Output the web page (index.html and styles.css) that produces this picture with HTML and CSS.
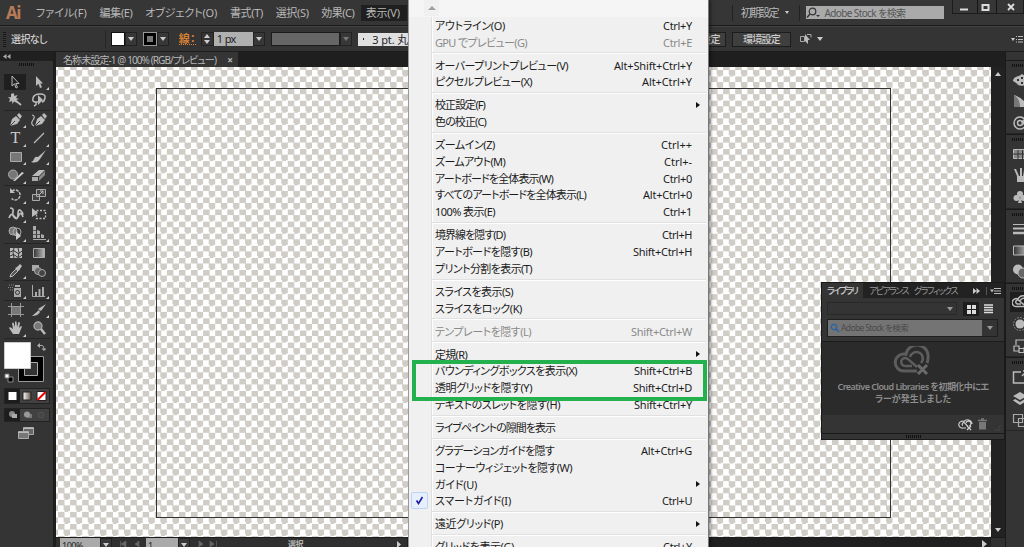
FILE: index.html
```
<!DOCTYPE html>
<html lang="ja">
<head>
    <meta charset="UTF-8">
    <meta name="viewport" content="width=device-width, initial-scale=1.0">
    <title>名称未設定-1</title>
    <link rel="stylesheet" href="styles.css">
</head>
<body>
<div class="app">
    <header class="menubar">
        <div class="logo"><span data-w="14">Ai</span></div>
        <nav class="menus">
            <span data-w="51">ファイル(F)</span>
            <span data-w="33">編集(E)</span>
            <span data-w="72">オブジェクト(O)</span>
            <span data-w="33">書式(T)</span>
            <span data-w="33">選択(S)</span>
            <span data-w="33">効果(C)</span>
        </nav>
        <div class="menu-open"><span data-w="34">表示(V)</span></div>
        <div class="workspace"><span data-w="37">初期設定</span><i class="caret small"></i></div>
        <div class="stock">
            <svg width="15" height="12" viewBox="0 0 15 12"><circle cx="6.5" cy="4.5" r="3.3" fill="none" stroke="#333" stroke-width="1.2"/><path d="M4 7L1 10.500" stroke="#333" stroke-width="1.5"/><path d="M10 8h4l-2 2z" fill="#333"/></svg>
            <span data-w="81">Adobe Stock を検索</span>
        </div>
        <div class="window-buttons">
            <svg width="70" height="14" viewBox="0 0 70 14"><path d="M24.500 0v13M43.500 0v13" stroke="#151515"/><path d="M7 9.500h8" stroke="#ddd" stroke-width="2"/><path d="M29.500 5h6v5h-6z" fill="none" stroke="#ddd" stroke-width="2"/><path d="M55 4l6 6M61 4l-6 6" stroke="#ddd" stroke-width="1.800"/></svg>
        </div>
    </header>

    <div class="control">
        <i class="grip-v"></i>
        <b class="selection" data-w="36">選択なし</b>
        <i class="divider"></i>
        <i class="swatch"></i><span class="drop"><i class="caret"></i></span>
        <i class="swatch stroke"></i><span class="drop"><i class="caret"></i></span>
        <b class="stroke-label" data-w="17">線：</b>
        <span class="stepper"><i class="up"></i><i class="caret"></i></span>
        <span class="weight"><span data-w="19">1 px</span></span><span class="drop"><i class="caret"></i></span>
        <span class="profile"></span><span class="drop off"><i class="caret"></i></span>
        <span class="brush"><i class="dot"></i><span data-w="36">3 pt. 丸</span></span>
        <span class="btn doc"><b data-w="19">設定</b></span>
        <span class="btn"><b data-w="37">環境設定</b></span>
        <svg class="align" width="24" height="12" viewBox="0 0 24 12"><path d="M.5 3.500h4v5h-4zM7 1.500h4v3" fill="none" stroke="#aaa"/><path d="M5 1l5 6H8v4L5 8z" fill="#bbb"/><path d="M17 4h6l-3 4z" fill="#ccc"/></svg>
        <svg class="bar-menu" width="13" height="8" viewBox="0 0 13 8"><path d="M0 3h4l-2 3z" fill="#ccc"/><path d="M5 1.500h1M5 4.500h1M5 7h1M7 1.500h5M7 4.500h5M7 7h5" stroke="#bbb"/></svg>
    </div>

    <div class="main">
        <aside class="tools">
            <div class="tools-head"><svg width="8" height="5" viewBox="0 0 8 5"><path d="M3.500 0v5L0 2.500zM7.500 0v5L4 2.500z" fill="#aaa"/></svg></div>
            <div class="tools-grip"><i class="grip-h"></i></div>
            <div class="group two">
                <span class="tool active"><svg viewBox="0 0 18 16"><path d="M6 2v10l2.500-2.200L10 14l1.500-.7L9.800 9.500H13z" fill="#222" stroke="#bbb"/></svg></span>
                <span class="tool more"><svg viewBox="0 0 18 16"><path d="M6 2v10l2.500-2.200L10 14l2-.7-1.700-3.800H13z" fill="#bbb"/></svg></span>
                <span class="tool"><svg viewBox="0 0 18 16"><path d="M6.500 1l1 3 3-1-1.500 3 3 1-3 1 1 3-3-1.500L5.500 12l-.5-3-3 1 1-3-2-2 3 .2L4 2z" fill="#bbb"/><path d="M8 8l6 5" stroke="#bbb" stroke-width="1.700"/></svg></span>
                <span class="tool"><svg viewBox="0 0 18 16"><path d="M9 10H5.500Q2 10 3 6t7-4 5 4-3 4M5 10q3 2-1 4" fill="none" stroke="#bbb" stroke-width="1.500"/><path d="M8 3v10l5-5z" fill="#bbb"/></svg></span>
            </div>
            <div class="group four">
                <span class="tool more"><svg viewBox="0 0 18 16"><path d="M3 14l2-7 4-3 4 4-3 4zM10 3l2-2 3 3-2 3z" fill="#bbb"/><path d="M3 14l5-5" stroke="#444"/></svg></span>
                <span class="tool"><svg viewBox="0 0 18 16"><path d="M5 14l2-7 4-3 4 4-3 4zM12 3l2-2 3 3-2 3z" fill="#bbb"/><path d="M5 14l5-5" stroke="#444"/><path d="M4 14Q0 12 3 8T2 3" fill="none" stroke="#bbb" stroke-width="1.200"/></svg></span>
                <span class="tool more"><b class="type">T</b></span>
                <span class="tool more"><svg viewBox="0 0 18 16"><path d="M4 13L14 3" stroke="#bbb" stroke-width="1.200"/></svg></span>
                <span class="tool more"><svg viewBox="0 0 18 16"><path d="M3.500 3.500h11v9h-11z" fill="#777" stroke="#aaa"/></svg></span>
                <span class="tool more"><svg viewBox="0 0 18 16"><path d="M16 1L8 8l2 2zM8 8q-3-1-4 2t-3 3q6 2 9-3z" fill="#bbb"/></svg></span>
                <span class="tool more"><svg viewBox="0 0 18 16"><circle cx="6" cy="7.500" r="4.500" fill="#777" stroke="#aaa"/><path d="M6 14l9-9 2 1-9 8z" fill="#ccc"/></svg></span>
                <span class="tool more"><svg viewBox="0 0 18 16"><path d="M2 9l7-6h6l-6 6z" fill="#bbb"/><path d="M2 10h6v4H2z" fill="#aaa"/><path d="M9 10l6-6v4l-6 6z" fill="#888"/></svg></span>
            </div>
            <div class="group three">
                <span class="tool more"><svg viewBox="0 0 18 16"><path d="M5 4a5 5 0 1 1-.5 7.500" fill="none" stroke="#bbb" stroke-width="1.500" stroke-dasharray="3 1"/><path d="M3 1v5h5z" fill="#bbb"/></svg></span>
                <span class="tool more"><svg viewBox="0 0 18 16"><path d="M6.500 2.500h9v7h-9zM2.500 7.500h7v6h-7z" fill="#444" stroke="#aaa"/><path d="M9 8l4-4M10 4h3v3" fill="none" stroke="#bbb"/></svg></span>
                <span class="tool more"><svg viewBox="0 0 18 16"><path d="M3 2q4 0 3 4t2 6 3-4 3-3 1 4M2 12q2-5 4-3t3 3 3-3 4 2" fill="none" stroke="#bbb" stroke-width="1.700"/></svg></span>
                <span class="tool"><svg viewBox="0 0 18 16"><path d="M2 2v9l6-4z" fill="#bbb"/><path d="M6.500 4.500h9v8h-9z" fill="none" stroke="#bbb" stroke-width="1.300" stroke-dasharray="2 1.500"/></svg></span>
                <span class="tool more"><svg viewBox="0 0 18 16"><circle cx="6" cy="6" r="4" fill="#777" stroke="#aaa"/><circle cx="10" cy="7" r="4" fill="none" stroke="#aaa"/><path d="M9 6v9l5-4z" fill="#ccc"/></svg></span>
                <span class="tool more"><svg viewBox="0 0 18 16"><path d="M3 1h3v12H3zM7 5l3 1v7H7zM11 9l3 1v3h-3zM3 14h13v1H3z" fill="#aaa"/><path d="M3 5.500h3M3 9.500h7" stroke="#555"/></svg></span>
            </div>
            <div class="group mesh">
                <span class="tool"><svg viewBox="0 0 18 16"><path d="M3 3h12v10H3z" fill="#bbb"/><path d="M3 7q4-3 6 0t6-1M3 11q4-3 6 0t6-1M7 3q-2 4 0 10M11 3q2 4 0 10" fill="none" stroke="#333"/></svg></span>
                <span class="tool"><svg viewBox="0 0 18 16"><defs><linearGradient id="g"><stop stop-color="#333"/><stop offset="1" stop-color="#bbb"/></linearGradient></defs><path d="M3.500 3.500h11v9h-11z" fill="url(#g)" stroke="#aaa"/></svg></span>
                <span class="tool more"><svg viewBox="0 0 18 16"><path d="M3 14l1-3 5-5 2 2-5 5z" fill="#555" stroke="#bbb"/><path d="M8 5l2-1 3-3 2 2-2 3-1 2z" fill="#bbb"/></svg></span>
                <span class="tool"><svg viewBox="0 0 18 16"><path d="M2 2h7v6H2z" fill="#aaa"/><circle cx="8" cy="8" r="3.500" fill="#666" stroke="#aaa"/><circle cx="12" cy="10" r="3.500" fill="#444" stroke="#aaa"/></svg></span>
            </div>
            <div class="group one">
                <span class="tool more"><svg viewBox="0 0 18 16"><path d="M8 2h5v2H8zM7 5h7v9H7z" fill="#aaa"/><path d="M2 2h5M1 4.500h6M3 7h3" stroke="#888" stroke-dasharray="1 1"/><circle cx="10.500" cy="9.500" r="2" fill="none" stroke="#333"/></svg></span>
                <span class="tool more"><svg viewBox="0 0 18 16"><path d="M2.500 2v11.500H15" fill="none" stroke="#aaa"/><path d="M5 9h2v5H5zM8.500 6h2v8h-2zM12 4h2v10h-2z" fill="#aaa"/></svg></span>
            </div>
            <div class="group two">
                <span class="tool"><svg viewBox="0 0 18 16"><path d="M4.500 1v14M13.500 1v14M1 4.500h16M1 12.500h16" stroke="#999"/><path d="M5 5h8v7H5z" fill="#777"/></svg></span>
                <span class="tool more"><svg viewBox="0 0 18 16"><path d="M16 2L8 7l3 2zM9 8L2 14q6 0 8-4z" fill="#bbb"/></svg></span>
                <span class="tool more"><svg viewBox="0 0 18 16"><path d="M6 14L2 8l1-1 3 2-1-6 1.500-.5L8 7V1.500h1.500L10 7l1.500-5 1.500.5L12 8l2-2 1 .5-3 7.500z" fill="#bbb"/></svg></span>
                <span class="tool"><svg viewBox="0 0 18 16"><circle cx="8" cy="6" r="4" fill="#777" stroke="#aaa" stroke-width="1.300"/><path d="M11 9l4 5" stroke="#bbb" stroke-width="2.400"/></svg></span>
            </div>
            <div class="colors">
                <svg width="46" height="48" viewBox="0 0 46 48"><path d="M14.500 17.500h25v25h-25z" fill="#000" stroke="#999"/><path d="M20.500 23.500h13v13h-13z" fill="#333" stroke="#aaa"/><path d="M.5 3.500h26v26H.5z" fill="#fff" stroke="#ccc"/><path d="M34.500 6.500h3.500q2 0 2 4" fill="none" stroke="#aaa"/><path d="M36 4v5l-3-2.500zM37.500 9.500h5L40 12z" fill="#aaa"/><path d="M4 38h5v5H4z" fill="#000" stroke="#888"/><path d="M1 35h4v4H1z" fill="#fff" stroke="#777"/></svg>
            </div>
            <div class="modes">
                <svg width="44" height="14" viewBox="0 0 44 14"><defs><linearGradient id="h"><stop stop-color="#fff"/><stop offset="1" stop-color="#654"/></linearGradient></defs><path d="M0 0h15v14H0z" fill="#1d1d1d"/><path d="M3.500 3h8v8h-8z" fill="#fff"/><path d="M18 3h8v8h-8z" fill="url(#h)" stroke="#222"/><path d="M32 2.500h9v9h-9z" fill="#fff" stroke="#222"/><path d="M32.500 11l8-8" stroke="#e00" stroke-width="2"/></svg>
            </div>
            <div class="modes draw">
                <svg width="44" height="12" viewBox="0 0 44 12"><path d="M0 0h15v12H0z" fill="#1d1d1d"/><circle cx="7" cy="5" r="3" fill="#888"/><path d="M7 5h5v4H7z" fill="#aaa"/><path d="M22 5h5v4h-5z" fill="#777"/><circle cx="22" cy="5.500" r="3" fill="#999"/><circle cx="36" cy="6" r="2.800" fill="#444" stroke="#555"/></svg>
            </div>
            <div class="screen"><svg width="18" height="14" viewBox="0 0 18 14"><path d="M6.500 1.500h10v7h-10z" fill="#666" stroke="#aaa"/><path d="M1.500 5.500h10v7h-10z" fill="#777" stroke="#aaa"/><path d="M6 2.500h11M1 6.500h11" stroke="#bbb"/></svg></div>
        </aside>

        <section class="document">
            <div class="tabs"><div class="tab"><span data-w="153">名称未設定-1 @ 100% (RGB/プレビュー)</span><b>×</b></div></div>
            <div class="view">
                <div class="canvas"><div class="artboard"></div></div>
                <div class="scroll-v"><i class="up"></i><i class="caret"></i></div>
            </div>
            <footer class="status">
                <span class="zoom"><span data-w="21">100%</span></span><span class="drop"><i class="caret"></i></span>
                <svg width="34" height="10" viewBox="0 0 34 10"><path d="M8.500 3v6M14 3v6L9 6zM27 3v6l-4-3z" fill="#666" stroke="#666" stroke-width=".7"/></svg>
                <span class="page">1</span><span class="drop"><i class="caret"></i></span>
                <svg width="30" height="10" viewBox="0 0 30 10"><path d="M9 3v6l4-3zM20 3v6l4-3zM26.500 3v6" fill="#666" stroke="#666" stroke-width=".7"/></svg>
                <b class="status-text"><span data-w="15">選択</span></b>
                <svg class="status-arrow" width="30" height="10" viewBox="0 0 30 10"><path d="M13 0h17v10H13z" fill="#202020"/><path d="M3 3v7l4-3.500zM20 3v7l-4-3.500z" fill="#ccc"/></svg>
                <div class="scroll-h"><svg width="6" height="8" viewBox="0 0 6 8"><path d="M0 0v8l5-4z" fill="#ccc"/></svg></div>
                <i class="corner"></i>
            </footer>
        </section>

        <aside class="dock">
            <div class="dock-group">
                <svg viewBox="0 0 16 16"><path d="M1 9Q1 5 7 4l3-2 5 3v7q-4 3-9 1-1-2-5-4z" fill="#bbb"/><path d="M5 7h2v2H5zM9 5h2v2H9zM9 10h2v2H9z" fill="#333"/></svg>
                <svg viewBox="0 0 16 16"><path d="M2 2v12h14Q12 5 2 2z" fill="#bbb"/><path d="M2 2v12h6Q8 6 2 2z" fill="#777"/></svg>
                <svg viewBox="0 0 16 16"><circle cx="8" cy="8" r="6" fill="none" stroke="#bbb" stroke-width="1.500"/><circle cx="8" cy="8" r="2.500" fill="none" stroke="#bbb" stroke-width="1.500"/><path d="M9 7l4-4 3 3-4 4z" fill="#bbb"/></svg>
            </div>
            <div class="dock-group">
                <svg viewBox="0 0 16 16"><path d="M1.500 3.500h14v9h-14z" fill="#888" stroke="#bbb"/><path d="M1 8h15M6 4v9M10.500 4v9" stroke="#333"/></svg>
                <svg viewBox="0 0 16 16"><path d="M5 9h9v6H5zM2 2l2 0 3 7H5zM8 1h2v8H8zM12 3h2l-1 6h-2z" fill="#bbb"/></svg>
                <svg viewBox="0 0 16 16"><circle cx="8" cy="5" r="3" fill="#bbb"/><circle cx="4.500" cy="9" r="3" fill="#bbb"/><circle cx="11.500" cy="9" r="3" fill="#bbb"/><path d="M8 7l2 7H6z" fill="#bbb"/></svg>
            </div>
            <div class="dock-group">
                <svg viewBox="0 0 16 16"><path d="M1 4.500h15" stroke="#bbb"/><path d="M1 8.500h15" stroke="#bbb" stroke-width="2"/><path d="M1 13h15" stroke="#bbb" stroke-width="2.500"/></svg>
                <svg viewBox="0 0 16 16"><path d="M1.500 4h14v9h-14z" fill="url(#g)" stroke="#bbb"/></svg>
                <svg viewBox="0 0 16 16"><circle cx="6" cy="6.500" r="5" fill="#bbb"/><circle cx="11" cy="10" r="5" fill="#666" stroke="#bbb"/></svg>
            </div>
            <div class="dock-group open">
                <svg viewBox="0 0 16 16"><path d="M15 12.500H5a4 4 0 1 1 1-7.500 6 6 0 0 1 10-1M9 10H6a2 2 0 1 1 1.500-3l6 5M8 7q2-4 6-2" fill="none" stroke="#bbb" stroke-width="1.500"/></svg>
                <svg viewBox="0 0 16 16"><circle cx="8" cy="8" r="4.500" fill="#bbb"/><circle cx="8" cy="8" r="6.500" fill="none" stroke="#999" stroke-dasharray="1.500 1.500"/></svg>
                <svg viewBox="0 0 16 16"><path d="M4 7V2h12v8h-5M2 8h5v5H2zM7 10.500h5v4H7z" fill="none" stroke="#bbb" stroke-width="1.200"/></svg>
            </div>
            <div class="dock-group">
                <svg viewBox="0 0 16 16"><path d="M9 3H1.500v11H14V9M10 7l5-5M11 2h4v4" fill="none" stroke="#bbb" stroke-width="1.500"/></svg>
                <svg viewBox="0 0 16 16"><path d="M8 2l7 4-7 4-7-4zM3 9l5 3 5-3 2 1.500L8 15l-7-4.500z" fill="#bbb"/></svg>
                <svg viewBox="0 0 16 16"><path d="M1.500 2.500h9v8h-9zM6.500 6.500h9v8h-9z" fill="none" stroke="#aaa" stroke-width="1.200"/></svg>
            </div>
        </aside>
    </div>

    <div class="library">
        <div class="lib-tabs">
            <div class="lib-tab"><span data-w="30">ライブラリ</span></div>
            <span data-w="39">アピアランス</span>
            <span data-w="43">グラフィックス</span>
            <svg width="30" height="8" viewBox="0 0 30 8"><path d="M1 1v6l3.500-3zM4.500 1v6L8 4z" fill="#ccc"/><path d="M14.500 0v8" stroke="#555"/><path d="M18 2.500h4l-2 3z" fill="#bbb"/><path d="M22 1.500h7M22 4h7M22 6.500h7" stroke="#bbb"/></svg>
        </div>
        <div class="lib-bar">
            <span class="lib-select"><i class="caret"></i></span>
            <svg width="34" height="14" viewBox="0 0 34 14"><path d="M0 0h16v14H0z" fill="#1d1d1d"/><path d="M4 3h4v4H4zM9 3h4v4H9zM4 8h4v4H4zM9 8h4v4H9z" fill="#ddd"/><path d="M21 3h9M21 5.500h9M21 8h9M21 10.500h9" stroke="#ddd" stroke-width="1.500"/></svg>
        </div>
        <div class="lib-search">
            <span class="lib-input">
                <svg width="10" height="10" viewBox="0 0 10 10"><circle cx="4" cy="4" r="2.700" fill="none" stroke="#2864a8" stroke-width="1.300"/><path d="M6 6l3 3" stroke="#2864a8" stroke-width="1.700"/></svg>
                <span data-w="67">Adobe Stock を検索</span>
            </span>
            <i class="caret"></i>
        </div>
        <div class="lib-body">
            <svg width="40" height="31" viewBox="0 0 40 31"><path d="M24 25H11a8.500 8.500 0 1 1 2-16.700A11 11 0 0 1 35 12q0 3-1 5" fill="none" stroke="#5d5d5d" stroke-width="3"/><path d="M19 20h-7a4 4 0 1 1 3-6.800l9 7.800M17 11a6.500 6.500 0 1 1 11 6" fill="none" stroke="#5d5d5d" stroke-width="2.500"/><path d="M25 19l9 9M34 19l-9 9" stroke="#6a6a6a" stroke-width="3"/></svg>
            <b data-w="151">Creative Cloud Libraries を初期化中にエ</b>
            <b data-w="76">ラーが発生しました</b>
        </div>
        <div class="lib-foot">
            <svg width="46" height="16" viewBox="0 0 46 16"><path d="M8 12H5a3.500 3.500 0 1 1 1-6.500A4.500 4.500 0 0 1 14 8M5 9.500a1.500 1.500 0 1 1 2-2l3 3M8 7a2.500 2.500 0 1 1 3 3" fill="none" stroke="#ccc" stroke-width="1.200"/><path d="M9 10l4 4M13 10l-4 4" stroke="#ccc" stroke-width="1.300"/><path d="M20 4.500h9M23 3h3" stroke="#777" stroke-width="1.300"/><path d="M21 6h7v7.500h-7z" fill="#777"/><path d="M37 15l6-6M40 15l3-3" stroke="#555" stroke-dasharray="1 1"/></svg>
        </div>
        <div class="lib-grip"><i class="grip-h"></i></div>
    </div>

    <div class="menu">
        <div class="menu-head"><span><i class="up"></i></span></div>
        <div class="item"><span data-w="70">アウトライン(O)</span><kbd data-w="29">Ctrl+Y</kbd></div>
        <div class="item off"><span data-w="92">GPU でプレビュー(G)</span><kbd data-w="29">Ctrl+E</kbd></div>
        <hr>
        <div class="item"><span data-w="133">オーバープリントプレビュー(V)</span><kbd data-w="78">Alt+Shift+Ctrl+Y</kbd></div>
        <div class="item"><span data-w="97">ピクセルプレビュー(X)</span><kbd data-w="50">Alt+Ctrl+Y</kbd></div>
        <hr>
        <div class="item sub"><span data-w="50">校正設定(F)</span></div>
        <div class="item"><span data-w="51">色の校正(C)</span></div>
        <hr>
        <div class="item"><span data-w="60">ズームイン(Z)</span><kbd data-w="31">Ctrl++</kbd></div>
        <div class="item"><span data-w="70">ズームアウト(M)</span><kbd data-w="28">Ctrl+-</kbd></div>
        <div class="item"><span data-w="118">アートボードを全体表示(W)</span><kbd data-w="29">Ctrl+0</kbd></div>
        <div class="item"><span data-w="151">すべてのアートボードを全体表示(L)</span><kbd data-w="49">Alt+Ctrl+0</kbd></div>
        <div class="item"><span data-w="60">100% 表示(E)</span><kbd data-w="29">Ctrl+1</kbd></div>
        <hr>
        <div class="item"><span data-w="70">境界線を隠す(D)</span><kbd data-w="30">Ctrl+H</kbd></div>
        <div class="item"><span data-w="97">アートボードを隠す(B)</span><kbd data-w="59">Shift+Ctrl+H</kbd></div>
        <div class="item"><span data-w="97">プリント分割を表示(T)</span></div>
        <hr>
        <div class="item"><span data-w="78">スライスを表示(S)</span></div>
        <div class="item"><span data-w="87">スライスをロック(K)</span></div>
        <hr>
        <div class="item off"><span data-w="96">テンプレートを隠す(L)</span><kbd data-w="61">Shift+Ctrl+W</kbd></div>
        <hr>
        <div class="item sub"><span data-w="32">定規(R)</span></div>
        <div class="item"><span data-w="142">バウンディングボックスを表示(X)</span><kbd data-w="58">Shift+Ctrl+B</kbd></div>
        <div class="item"><span data-w="97">透明グリッドを隠す(Y)</span><kbd data-w="59">Shift+Ctrl+D</kbd></div>
        <div class="item"><span data-w="125">テキストのスレットを隠す(H)</span><kbd data-w="58">Shift+Ctrl+Y</kbd></div>
        <hr>
        <div class="item"><span data-w="120">ライブペイントの隙間を表示</span></div>
        <hr>
        <div class="item"><span data-w="119">グラデーションガイドを隠す</span><kbd data-w="51">Alt+Ctrl+G</kbd></div>
        <div class="item"><span data-w="137">コーナーウィジェットを隠す(W)</span></div>
        <div class="item sub"><span data-w="42">ガイド(U)</span></div>
        <div class="item checked"><svg width="17" height="17" viewBox="0 0 17 17"><path d="M5.500 8.500l2 3 4-6.500" fill="none" stroke="#1c1ca0" stroke-width="1.600"/></svg><span data-w="76">スマートガイド(I)</span><kbd data-w="30">Ctrl+U</kbd></div>
        <hr>
        <div class="item sub"><span data-w="68">遠近グリッド(P)</span></div>
        <hr>
        <div class="item"><span data-w="79">グリッドを表示(G)</span><kbd data-w="29">Ctrl+¥</kbd></div>
    </div>
    <div class="highlight"></div>
</div>
<script src="fit.js"></script>
</body>
</html>
```
FILE: fit.js
```
// spread the letters of each label over its column width
document.querySelectorAll("[data-w]").forEach((el) => {
    const natural = el.getBoundingClientRect().width;
    const count = el.textContent.length;
    el.style.letterSpacing = (el.dataset.w - natural) / count + "px";
});
```
FILE: styles.css
```
* {
  box-sizing: border-box;
}

body {
  margin: 0;
  overflow: hidden;
  font-family: "Noto Sans", "Noto Sans CJK JP", sans-serif;
  font-feature-settings: "palt";
  font-size: 11px;
  line-height: 1;
  color: #b8b8b8;
  background-color: #343434;
}

svg {
  display: block;
  flex: none;
}

span,
b,
i {
  white-space: nowrap;
}

.app {
  position: relative;
  width: 1024px;
  height: 547px;
  overflow: hidden;
  display: flex;
  flex-direction: column;
}

.caret {
  border: 3px solid transparent;
  border-top: 4px solid #ccc;
  border-bottom: 0;
}

.caret.small {
  border-width: 3px 2px 0;
}

.up {
  border: 3px solid transparent;
  border-bottom: 4px solid #ccc;
  border-top: 0;
}

.menubar {
  height: 26px;
  flex: none;
  display: flex;
  align-items: center;
  padding-left: 6px;
  background-color: #363636;
  border-bottom: 1px solid #1c1c1c;
}

.logo {
  width: 30px;
  font: bold 17px "Open Sans", sans-serif;
  line-height: 22px;
  color: #b97b56;
}

.menus {
  width: 326px;
  display: flex;
  gap: 12.700px;
}

.menu-open {
  width: 46px;
  height: 16px;
  padding: 2px 5px;
  background-color: #1f1f1f;
}

.workspace {
  display: flex;
  align-items: center;
  gap: 7px;
  width: 69px;
  height: 16px;
  margin-left: 325px;
  padding-left: 8px;
  border-left: 1px solid #222;
  border-right: 1px solid #222;
}

.stock {
  display: flex;
  align-items: center;
  gap: 3px;
  width: 138px;
  height: 13px;
  margin-left: 6px;
  background-color: #aaa;
  color: #555;
  font-size: 10px;
}

.window-buttons {
  align-self: flex-start;
  margin-left: 8px;
  height: 14px;
  border: 1px solid #1c1c1c;
  border-top: 0;
}

.control {
  height: 26px;
  flex: none;
  display: flex;
  align-items: center;
  padding-left: 3px;
  background-color: #343434;
  border-top: 1px solid #424242;
  border-bottom: 1px solid #1c1c1c;
}

.grip-v {
  width: 3px;
  height: 15px;
  margin-right: 5px;
  background: repeating-linear-gradient(#151515 0 1px, #3a3a3a 1px 2px);
}

.selection {
  font-size: 10px;
  font-weight: 500;
  color: #ccc;
}

.divider {
  width: 1px;
  height: 18px;
  margin: 0 5px 0 58px;
  background-color: #262626;
}

.swatch {
  width: 14px;
  height: 14px;
  background-color: #fff;
  border: 1px solid #111;
}

.swatch.stroke {
  margin-left: 6px;
  background-color: #777;
  border: 4px solid #000;
  outline: 1px solid #999;
  outline-offset: -1px;
}

.drop {
  display: flex;
  align-items: center;
  justify-content: center;
  width: 12px;
  height: 14px;
  background-color: #383838;
  border: 1px solid #222;
}

.drop.off .caret {
  border-top-color: #777;
}

.stroke-label {
  margin-left: 10px;
  color: #d57f35;
  border-bottom: 1px dotted #d57f35;
}

.stepper {
  display: flex;
  flex-direction: column;
  align-items: center;
  justify-content: space-around;
  width: 13px;
  height: 14px;
  margin-left: 5px;
  border: 1px solid #222;
}

.weight {
  width: 39px;
  height: 14px;
  padding: 1px 3px;
  background-color: #b0b0b0;
  color: #222;
}

.profile {
  width: 70px;
  height: 14px;
  margin-left: 6px;
  background-color: #666;
  border: 1px solid #1c1c1c;
}

.brush {
  display: flex;
  align-items: center;
  width: 50px;
  height: 13px;
  margin-left: 6px;
  padding-left: 5px;
  overflow: hidden;
  background-color: #e0e0e0;
  color: #222;
}

.dot {
  width: 2px;
  height: 2px;
  margin-right: 8px;
  background-color: #222;
}

.btn {
  height: 15px;
  padding: 1px 10px;
  margin-left: 6px;
  font-size: 10px;
  color: #ccc;
  background-color: #3f3f3f;
  border: 1px solid #1c1c1c;
}

.btn b {
  font-weight: 500;
}

.btn.doc {
  width: 72px;
  padding-right: 5px;
  margin-left: 246px;
  text-align: right;
}

.align {
  margin-left: 9px;
}

.bar-menu {
  margin-left: 187px;
}

.main {
  flex: 1;
  min-height: 0;
  display: flex;
}

.tools {
  width: 56px;
  flex: none;
  border-right: 3px solid #1d1d1d;
  background-color: #343434;
}

.tools-head {
  height: 9px;
  padding: 2px 3px;
  background-color: #202020;
}

.tools-grip {
  height: 12px;
  padding: 2px 0 0 19px;
}

.grip-h {
  display: block;
  width: 15px;
  height: 3px;
  background: repeating-linear-gradient(90deg, #111 0 1px, #333 1px 2px);
}

.group {
  display: grid;
  grid-template-columns: 23px 23px;
  grid-auto-rows: 1fr;
  margin-left: 4px;
  width: 46px;
  border-bottom: 1px solid #252525;
}

.group.one { height: 20px; }
.group.two { height: 37.500px; }
.group.mesh { height: 37.500px; }
.group.three { height: 58px; }
.group.four { height: 75px; }

.tool {
  position: relative;
  display: flex;
  align-items: center;
  justify-content: center;
}

.tool svg {
  width: 18px;
  height: 16px;
}

.tool.active {
  margin: 1px 1px 1px 0;
  background-color: #1f1f1f;
}

.tool.more::after {
  content: "";
  position: absolute;
  right: 1px;
  bottom: 1px;
  border-left: 3px solid transparent;
  border-bottom: 3px solid #ccc;
}

.type {
  font: 16px "Liberation Serif", serif;
  color: #ccc;
}

.colors {
  padding: 0 0 0 4px;
  height: 49px;
}

.modes {
  width: 46px;
  margin: 0 0 4px 4px;
  border: 1px solid #222;
  background-color: #414141;
}

.draw {
  margin-bottom: 6px;
}

.screen {
  padding-left: 17px;
  margin-top: -2px;
}

.document {
  flex: 1;
  min-width: 0;
  display: flex;
  flex-direction: column;
}

.tabs {
  height: 15px;
  flex: none;
  background-color: #1f1f1f;
}

.tab {
  display: flex;
  align-items: center;
  justify-content: space-between;
  width: 182px;
  height: 15px;
  padding: 0 5px 0 7px;
  background-color: #353535;
  font-size: 10px;
}

.view {
  flex: 1;
  display: flex;
  min-height: 0;
}

.canvas {
  width: 935px;
  padding: 21px 100px 20px;
  background: repeating-conic-gradient(#d0ccc6 0 25%, #fff 0 50%) 2px 3px / 12.100px 12.100px;
}

.artboard {
  height: 430px;
  border: 1px solid #333;
}

.scroll-v {
  width: 14px;
  display: flex;
  flex-direction: column;
  align-items: center;
  justify-content: space-between;
  padding: 5px 0;
  background-color: #222;
}

.status {
  height: 10px;
  flex: none;
  display: flex;
  overflow: hidden;
  background-color: #303030;
  border-top: 1px solid #1c1c1c;
}

.zoom,
.page {
  width: 40px;
  height: 13px;
  margin-left: 4px;
  padding: 3px 2px;
  font-size: 9px;
  background-color: #aaa;
  color: #222;
}

.page {
  width: 32px;
  margin-left: 0;
}

.status-text {
  width: 153px;
  height: 14px;
  padding: 2px 0 0 45px;
  margin-left: 23px;
  font-size: 8px;
}

.status-arrow {
  margin-left: -2px;
}

.scroll-h {
  flex: 1;
  display: flex;
  justify-content: flex-end;
  padding: 2px 3px;
  background-color: #202020;
}

.corner {
  width: 14px;
}

.dock {
  width: 19px;
  flex: none;
  padding-top: 8px;
  overflow: hidden;
  background-color: #343434;
  border-left: 1px solid #1a1a1a;
}

.dock-group {
  display: flex;
  flex-direction: column;
  gap: 5.700px;
  width: 30px;
  height: 74.300px;
  padding: 10.500px 0 0 6px;
  border-top: 1px solid #1a1a1a;
  border-bottom: 1px solid #252525;
  background: repeating-linear-gradient(90deg, #111 0 1px, #333 1px 2px) 6px 3px / 20px 3px no-repeat;
}

.dock-group svg {
  width: 16px;
  height: 16px;
}

.open svg:first-child {
  background-color: #1e1e1e;
  outline: 2px solid #1e1e1e;
}

.library {
  position: absolute;
  left: 821px;
  top: 282px;
  width: 184px;
  height: 158px;
  display: flex;
  flex-direction: column;
  background-color: #343434;
  border: 1px solid #1a1a1a;
  font-size: 9px;
}

.lib-tabs {
  height: 15px;
  flex: none;
  display: flex;
  align-items: center;
  gap: 6px;
  background-color: #222;
  color: #999;
}

.lib-tab {
  width: 41px;
  height: 15px;
  padding: 3px 5px;
  font-weight: 500;
  background-color: #343434;
  color: #ccc;
}

.lib-tabs svg {
  margin-left: 9px;
}

.lib-bar {
  display: flex;
  align-items: center;
  gap: 6px;
  height: 21px;
  padding-left: 5px;
}

.lib-select {
  display: flex;
  align-items: center;
  justify-content: flex-end;
  width: 130px;
  height: 13px;
  padding-right: 3px;
  border: 1px solid #292929;
}

.lib-select .caret,
.lib-search .caret {
  border-top-color: #999;
}

.lib-search {
  display: flex;
  align-items: center;
  gap: 5px;
  width: 171px;
  height: 18px;
  margin: 0 0 4px 5px;
  border: 1px solid #1f1f1f;
}

.lib-input {
  display: flex;
  align-items: center;
  gap: 1px;
  width: 154px;
  height: 16px;
  padding-left: 2px;
  font-size: 8.500px;
  color: #4a4a4a;
  background-color: #747474;
}

.lib-body {
  height: 74px;
  display: flex;
  flex-direction: column;
  align-items: center;
  padding-top: 4px;
  background-color: #2b2b2b;
  border-top: 1px solid #1c1c1c;
  color: #8c8c8c;
}

.lib-body b {
  font-weight: 600;
  line-height: 11.500px;
}

.lib-body svg {
  margin-bottom: 4px;
}

.lib-foot {
  flex: 1;
  display: flex;
  justify-content: flex-end;
  align-items: center;
}

.lib-grip {
  height: 6px;
  display: flex;
  justify-content: center;
  align-items: center;
  border-top: 1px solid #1a1a1a;
}

.menu {
  position: absolute;
  left: 408px;
  top: 0;
  width: 301px;
  height: 560px;
  color: #1c1c1c;
  background: linear-gradient(90deg, transparent 22px, #e0e0e0 22px 23px, #fff 23px 24px, transparent 24px) #f0f0f0;
  border-left: 1px solid #999;
  border-right: 1px solid #777;
  box-shadow: 2px 0 3px rgba(0, 0, 0, 0.4);
}

.menu-head {
  height: 16.600px;
  padding-left: 15px;
  background-color: #f5f5f5;
}

.menu-head span {
  display: flex;
  align-items: center;
  justify-content: center;
  width: 15px;
  height: 16px;
  background-color: #f0f0f0;
}

.menu-head .up {
  border-width: 0 4px 4px;
  border-bottom-color: #a0a0a0;
}

.item {
  position: relative;
  display: flex;
  align-items: center;
  justify-content: space-between;
  height: 16.800px;
  padding: 0.500px 16px 0 26px;
}

.item.off {
  color: #8a8a8a;
}

.item kbd {
  font-family: inherit;
  white-space: nowrap;
}

.item.sub::after {
  content: "";
  margin-right: -8px;
  border: 3px solid transparent;
  border-left: 4px solid #111;
  border-right: 0;
}

.menu hr {
  height: 2px;
  margin: 2px 2px 2.200px 23px;
  border: 0;
  border-top: 1px solid #e0e0e0;
  border-bottom: 1px solid #fff;
}

.checked svg {
  position: absolute;
  left: 2px;
  top: 0;
  background-color: #e6effb;
  border-radius: 2px;
  outline: 1px solid #bcd4f5;
  outline-offset: -1px;
}

.highlight {
  position: absolute;
  left: 412px;
  top: 360px;
  width: 295px;
  height: 41px;
  border: 4px solid #22b14c;
}
```
